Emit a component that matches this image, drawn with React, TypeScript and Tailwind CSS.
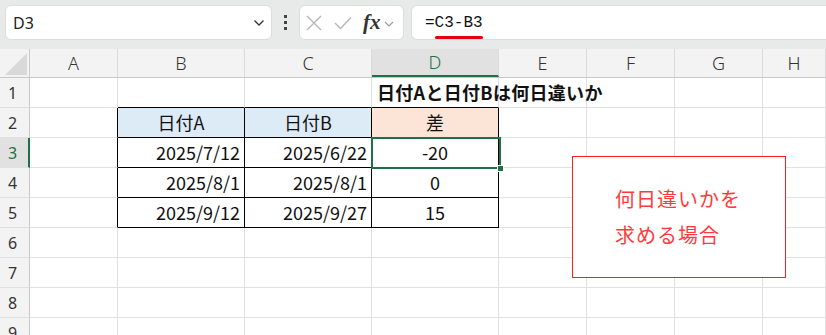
import React from "react"

const cols = [
    { key: "A", w: "w-[88px]" },
    { key: "B", w: "w-[127px]" },
    { key: "C", w: "w-[127px]" },
    { key: "D", w: "w-[127px]" },
    { key: "E", w: "w-[88px]" },
    { key: "F", w: "w-[88px]" },
    { key: "G", w: "w-[88px]" },
    { key: "H", w: "flex-1" },
]

type Cell = { text?: string; cls?: string }

// cell contents and per-cell styling by row
const sheet: Record<number, Record<string, Cell>> = {
    1: {
        B: { cls: "border-b-black" },
        C: { cls: "border-b-black" },
        D: { text: "日付Aと日付Bは何日違いか", cls: "border-b-black font-bold justify-start pl-[5px] overflow-visible whitespace-nowrap z-10 text-[18px] tracking-[0.3px]" },
    },
    2: {
        A: { cls: "border-r-black" },
        B: { text: "日付A", cls: "bg-[#ddebf7] border-r-black border-b-black justify-center" },
        C: { text: "日付B", cls: "bg-[#ddebf7] border-r-black border-b-black justify-center" },
        D: { text: "差", cls: "bg-[#fce4d6] border-r-black border-b-black justify-center" },
    },
    3: {
        A: { cls: "border-r-black" },
        B: { text: "2025/7/12", cls: "border-r-black border-b-black justify-end pr-[4px]" },
        C: { text: "2025/6/22", cls: "border-r-black border-b-black justify-end pr-[4px]" },
        D: { text: "-20", cls: "border-r-black border-b-black justify-center" },
    },
    4: {
        A: { cls: "border-r-black" },
        B: { text: "2025/8/1", cls: "border-r-black border-b-black justify-end pr-[4px]" },
        C: { text: "2025/8/1", cls: "border-r-black border-b-black justify-end pr-[4px]" },
        D: { text: "0", cls: "border-r-black border-b-black justify-center" },
    },
    5: {
        A: { cls: "border-r-black" },
        B: { text: "2025/9/12", cls: "border-r-black border-b-black justify-end pr-[4px]" },
        C: { text: "2025/9/27", cls: "border-r-black border-b-black justify-end pr-[4px]" },
        D: { text: "15", cls: "border-r-black border-b-black justify-center" },
    },
}

const rows = [1, 2, 3, 4, 5, 6, 7, 8, 9]

export default function App() {
    return (
        <div className="w-[826px] h-[335px] overflow-hidden bg-white text-[#111] font-['Noto_Sans_CJK_JP','Noto_Sans',sans-serif]">
            {/* Formula bar */}
            <div className="h-[49px] bg-[#e7eae8] flex items-start pt-[5px] pl-[5px] gap-[0px]">
                <div className="w-[267px] h-[35px] bg-white rounded-[6px] border border-[#dcdedd] flex items-center justify-between pl-[7px] pr-[6px]">
                    <span className="text-[16px] text-[#222] font-['Noto_Sans',sans-serif]">D3</span>
                    <svg width="12" height="8" viewBox="0 0 12 8" fill="none" stroke="#333" strokeWidth="1.3"><path d="M1.5 1.5 L6 6 L10.5 1.5" /></svg>
                </div>
                <div className="w-[27px] h-[35px] flex flex-col items-center justify-center gap-[3px]">
                    <span className="w-[3px] h-[3px] bg-[#444]" />
                    <span className="w-[3px] h-[3px] bg-[#444]" />
                    <span className="w-[3px] h-[3px] bg-[#444]" />
                </div>
                <div className="w-[105px] h-[35px] bg-white rounded-[6px] border border-[#dcdedd] flex items-center pl-[6px]">
                    <svg width="16" height="16" viewBox="0 0 16 16" fill="none" stroke="#b4b4b4" strokeWidth="1.3"><path d="M1 1 L15 15 M15 1 L1 15" /></svg>
                    <svg className="ml-[12px]" width="18" height="14" viewBox="0 0 18 14" fill="none" stroke="#b4b4b4" strokeWidth="1.3"><path d="M1 7 L6.5 12.5 L17 1.5" /></svg>
                    <span className="ml-[11px] text-[21px] italic font-bold text-[#333] font-['Liberation_Serif',serif] leading-none">fx</span>
                    <svg className="ml-[3px] mt-[2px]" width="10" height="6" viewBox="0 0 10 6" fill="none" stroke="#999" strokeWidth="1.1"><path d="M1 1 L5 5 L9 1" /></svg>
                </div>
                <div className="ml-[7px] flex-1 h-[35px] bg-white rounded-l-[6px] border border-r-0 border-[#dcdedd] flex items-center pl-[13px]">
                    <span className="text-[16px] text-[#111] font-['Liberation_Mono',monospace]">
                        =<span className="relative">C3-B3<span className="absolute left-0 right-0 top-[22px] h-[3px] rounded-full bg-[#e60012]" /></span>
                    </span>
                </div>
            </div>

            {/* Sheet */}
            <div className="relative">
                {/* column headers */}
                <div className="flex h-[29px] bg-[#f3f3f3] border-b border-[#c9c9c9]">
                    <div className="w-[30px] relative border-r border-[#c9c9c9]">
                        <svg className="absolute left-[5px] top-[4px]" width="22" height="22" viewBox="0 0 22 22"><path d="M22 0 L22 22 L0 22 Z" fill="#d9d9d9" /></svg>
                    </div>
                    {cols.map(c => (
                        <div
                            key={c.key}
                            className={`${c.w} flex items-center justify-center text-[18px] font-['Noto_Sans',sans-serif] font-light border-r border-[#dadada] ${c.key === "D" ? "bg-[#e1e1e1] text-[#1e7145] border-b-2 border-b-[#1e7145]" : "text-[#333]"}`}
                        >
                            {c.key}
                        </div>
                    ))}
                </div>

                {rows.map(r => (
                    <div key={r} className="flex h-[30px]">
                        <div className={`w-[30px] shrink-0 flex items-center pl-[8px] text-[16px] font-['Noto_Sans',sans-serif] border-b border-[#e1e1e1] ${r === 3 ? "bg-[#e1e1e1] text-[#1e7145] border-r-2 border-r-[#1e7145]" : "bg-[#f3f3f3] text-[#333] border-r border-r-[#c9c9c9]"}`}>
                            {r}
                        </div>
                        {cols.map(c => {
                            const cell = sheet[r]?.[c.key]
                            return (
                                <div
                                    key={c.key}
                                    className={`${c.w} shrink-0 relative flex items-center text-[18px] border-r border-b border-[#e1e1e1] ${cell?.cls ?? ""}`}
                                >
                                    {cell?.text}
                                </div>
                            )
                        })}
                    </div>
                ))}

                {/* active cell D3 */}
                <div className="absolute left-[371px] top-[88px] w-[130px] h-[32px] border-2 border-[#1e7145] pointer-events-none">
                    <span className="absolute right-[-5px] bottom-[-5px] w-[7px] h-[7px] bg-[#1e7145] border border-white" />
                </div>

                {/* text box shape */}
                <div className="absolute left-[572px] top-[107px] w-[214px] h-[122px] bg-white border-[1.5px] border-[#ff1f1f] flex flex-col justify-center pl-[42px] gap-[6px] text-[20px] tracking-[1px] text-[#ff3b3b]">
                    <span>何日違いかを</span>
                    <span>求める場合</span>
                </div>
            </div>
        </div>
    )
}
